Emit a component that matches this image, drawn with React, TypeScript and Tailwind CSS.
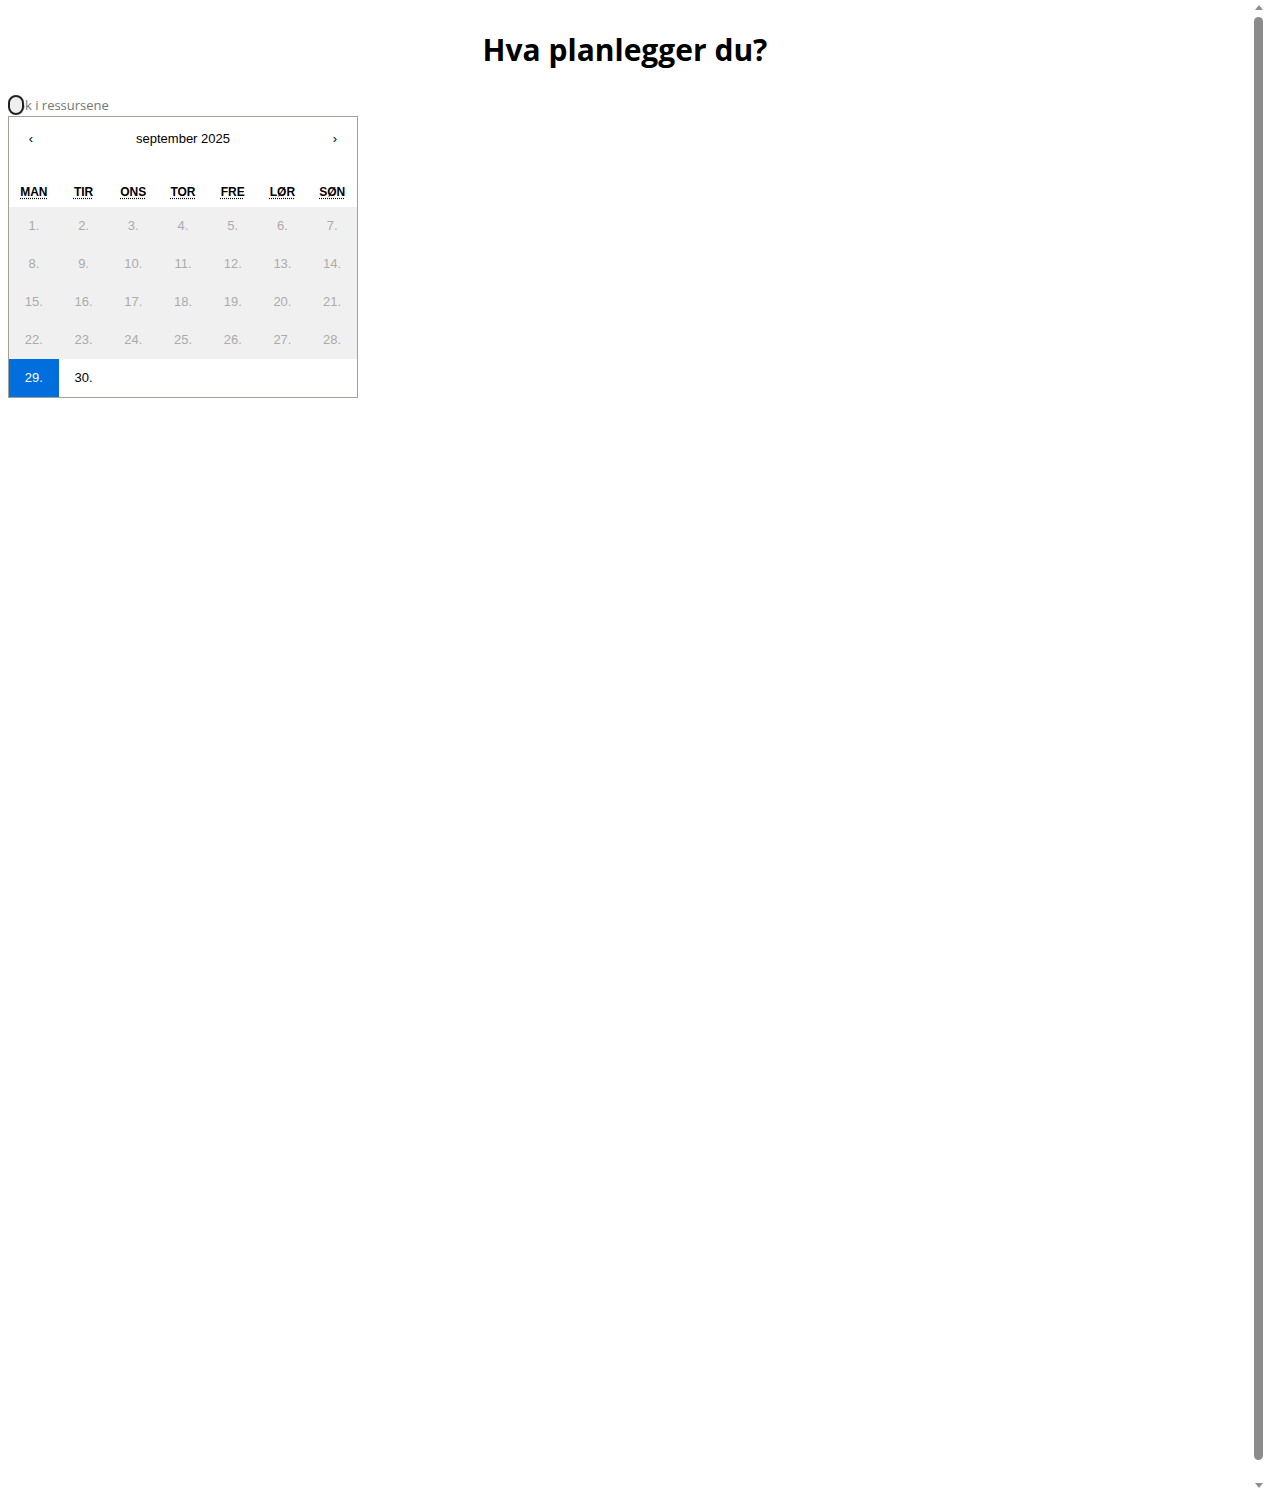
import React from "react";

const weekdays = [
  { short: "MAN", full: "mandag" },
  { short: "TIR", full: "tirsdag" },
  { short: "ONS", full: "onsdag" },
  { short: "TOR", full: "torsdag" },
  { short: "FRE", full: "fredag" },
  { short: "LØR", full: "lørdag" },
  { short: "SØN", full: "søndag" },
];

const days = Array.from({ length: 30 }, (_, i) => i + 1);
const today = 29;

const Calendar: React.FC = () => {
  return (
    <div
      className="w-[350px] border border-[#a0a096] bg-white text-black"
      style={{ fontFamily: '"Liberation Sans", Arial, sans-serif' }}
    >
      {/* Navigation */}
      <div className="flex h-[44px] items-center">
        <button className="w-[44px] h-full pb-[2px] text-[13px] leading-none">‹</button>
        <span className="flex-1 text-center text-[13px]">september 2025</span>
        <button className="w-[44px] h-full pb-[2px] text-[13px] leading-none">›</button>
      </div>

      {/* Weekdays */}
      <div className="mt-4 grid grid-cols-7 h-[30px] items-center text-center text-[12px] font-bold">
        {weekdays.map((d) => (
          <abbr
            key={d.short}
            title={d.full}
            className="underline decoration-dotted underline-offset-2"
          >
            {d.short}
          </abbr>
        ))}
      </div>

      {/* Days */}
      <div className="grid grid-cols-7">
        {days.map((d) => {
          const disabled = d < today;
          const active = d === today;
          return (
            <button
              key={d}
              disabled={disabled}
              className={`h-[38px] text-center text-[13px] ${
                active
                  ? "bg-[#006edc] text-white"
                  : disabled
                  ? "bg-[#f0f0f0] text-[#ababab]"
                  : "bg-white text-black"
              }`}
            >
              {d}.
            </button>
          );
        })}
      </div>
    </div>
  );
};

// page scrollbar, as the browser draws it
const Scrollbar: React.FC = () => (
  <div className="fixed right-0 top-0 flex h-screen w-[15px] flex-col items-center bg-white">
    <div className="ml-[2px] mt-[5px] h-0 w-0 border-x-[4px] border-b-[5px] border-x-transparent border-b-[#8f8f8f]" />
    <div className="ml-[2px] mt-[7px] h-[1443px] w-[9px] rounded-full bg-[#8b8b8b]" />
    <div className="ml-[2px] mt-auto mb-[5px] h-0 w-0 border-x-[4px] border-t-[5px] border-x-transparent border-t-[#8f8f8f]" />
  </div>
);

export default function App() {
  return (
    <div className="min-h-[1493px] w-[1250px] bg-white px-2">
      <h1
        className="pt-[30px] text-center text-[30px] font-bold leading-[40px] text-black"
        style={{ fontFamily: '"Open Sans", "Noto Sans", sans-serif' }}
      >
        Hva planlegger du?
      </h1>

      {/* Search */}
      <div className="relative mt-[25px] h-[21px]">
        <span
          className="absolute left-[2px] top-[3px] text-[13px] leading-[14px] text-[#757575]"
          style={{ fontFamily: '"Open Sans", sans-serif' }}
        >
          Søk i ressursene
        </span>
        <span className="absolute left-0 top-0 h-[20px] w-[16px] rounded-full border-2 border-[#222] bg-[#efefef]" />
      </div>

      <Calendar />
      <Scrollbar />
    </div>
  );
}
